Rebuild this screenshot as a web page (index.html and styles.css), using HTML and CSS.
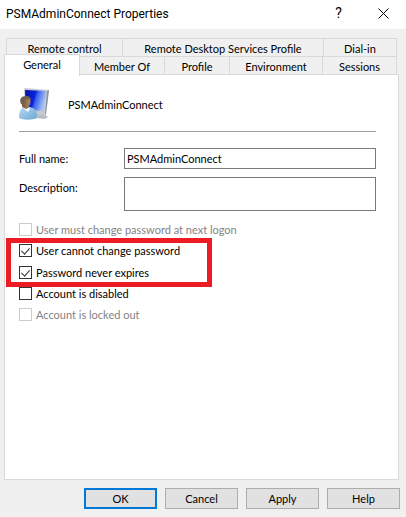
FILE: index.html
```html
<!DOCTYPE html>
<html lang="en">
<head>
    <meta charset="UTF-8">
    <meta name="viewport" content="width=device-width, initial-scale=1.0">
    <title>PSMAdminConnect Properties</title>
    <link rel="stylesheet" href="styles.css">
</head>
<body>
    <form class="dialog">
        <header class="title-bar">
            <h1>PSMAdminConnect Properties</h1>
            <button type="button" class="title-btn" aria-label="Help">?</button>
            <button type="button" class="title-btn" aria-label="Close">
                <svg width="11" height="11" viewBox="0 0 11 11"><path d="M.5 .5l10 10M10.5 .5l-10 10" stroke="#000" fill="none"/></svg>
            </button>
        </header>

        <div class="tabs" role="tablist">
            <div class="tab-row row-back">
                <button type="button" role="tab">Remote control</button>
                <button type="button" role="tab">Remote Desktop Services Profile</button>
                <button type="button" role="tab">Dial-in</button>
            </div>
            <div class="tab-row row-front">
                <button type="button" role="tab" class="active" aria-selected="true">General</button>
                <button type="button" role="tab">Member Of</button>
                <button type="button" role="tab">Profile</button>
                <button type="button" role="tab">Environment</button>
                <button type="button" role="tab">Sessions</button>
            </div>
        </div>

        <main class="panel" role="tabpanel">
            <div class="user">
                <svg class="user-icon" width="32" height="34" viewBox="0 0 32 34">
                    <defs>
                        <linearGradient id="screen" x1="0" y1="0" x2="1" y2="0.3">
                            <stop offset="0" stop-color="#04109c"/>
                            <stop offset="0.5" stop-color="#0a22e0"/>
                            <stop offset="0.6" stop-color="#3a62ea"/>
                            <stop offset="1" stop-color="#a8c2f6"/>
                        </linearGradient>
                        <linearGradient id="shirt" x1="0" y1="0" x2="1" y2="1">
                            <stop offset="0" stop-color="#b4dcf4"/>
                            <stop offset="1" stop-color="#6fa6d2"/>
                        </linearGradient>
                        <linearGradient id="face" x1="0" y1="0" x2="1" y2="0">
                            <stop offset="0" stop-color="#6e5138"/>
                            <stop offset="1" stop-color="#b58863"/>
                        </linearGradient>
                    </defs>
                    <!-- monitor -->
                    <path d="M16 26l9 1 4 3-3 2-10-1z" fill="#b9bec5"/>
                    <path d="M5 2l1-1 24 2-3 24-1 1-20-2z" fill="#c8ccd2"/>
                    <path d="M30 3l-3 24-1 1 2-24z" fill="#8b929c"/>
                    <path d="M6 3l21 1-2 20-18-1z" fill="url(#screen)"/>
                    <!-- person -->
                    <path d="M0 31c0-7 2-10 6-11l5 0c4 1 7 3 7 8 0 3-1 4-3 4-5 1-11 1-15-1z" fill="url(#shirt)"/>
                    <path d="M4 20l6 1 1 1-2 3-4-3z" fill="#f3f8fc"/>
                    <path d="M3 16l7 1-1 4-2 1-4-2z" fill="#936b4c"/>
                    <ellipse cx="7" cy="15" rx="4.500" ry="5.500" fill="url(#face)"/>
                    <path d="M2 17c-2-5 0-8 5-8 3 0 5 1 5 4-3-2-6-1-7 1 0 2-1 4-3 3z" fill="#6e6052"/>
                </svg>
                <span>PSMAdminConnect</span>
            </div>
            <hr>

            <div class="field">
                <label for="fullName">Full name:</label>
                <input type="text" id="fullName" value="PSMAdminConnect">
            </div>
            <div class="field">
                <label for="description">Description:</label>
                <textarea id="description"></textarea>
            </div>

            <div class="options">
                <label class="option disabled"><input type="checkbox" disabled>User must change password at next logon</label>
                <div class="highlight">
                    <label class="option"><input type="checkbox" checked>User cannot change password</label>
                    <label class="option"><input type="checkbox" checked>Password never expires</label>
                </div>
                <label class="option"><input type="checkbox">Account is disabled</label>
                <label class="option disabled"><input type="checkbox" disabled>Account is locked out</label>
            </div>
        </main>

        <footer class="actions">
            <button type="button" class="default">OK</button>
            <button type="button">Cancel</button>
            <button type="button">Apply</button>
            <button type="button">Help</button>
        </footer>
    </form>
</body>
</html>
```
FILE: styles.css
```css
* {
    box-sizing: border-box;
}
body {
    margin: 0;
    background-color: #f0f0f0;
    color: #000;
    font-family: Lato, "Liberation Sans", sans-serif;
    font-size: 11px;
    line-height: 13px;
}
button, input, textarea {
    font: inherit;
    color: inherit;
    margin: 0;
    border-radius: 0;
}
.dialog {
    display: flex;
    flex-direction: column;
    min-height: 100vh;
}

/* title bar */
.title-bar {
    display: flex;
    align-items: center;
    height: 29px;
    padding: 0 0 2px 6px;
    background-color: #fff;
    font-family: Roboto, "Liberation Sans", sans-serif;
}
.title-bar h1 {
    flex: 1;
    margin: 0;
    font-size: 12px;
    line-height: 16px;
    font-weight: normal;
}
.title-btn {
    display: flex;
    align-items: center;
    justify-content: center;
    width: 45px;
    height: 27px;
    padding: 0;
    border: none;
    background: none;
    color: #000;
    font-size: 14px;
}

/* tabs */
.tabs {
    padding: 9px 9px 0 6px;
}
.tab-row {
    display: grid;
}
.tab-row button {
    height: 19px;
    padding: 1px 0 0;
    border: 1px solid #d9d9d9;
    border-left: none;
    border-bottom: none;
    background-color: #f0f0f0;
    white-space: nowrap;
}
.tab-row button:first-child {
    border-left: 1px solid #d9d9d9;
}
.row-back {
    grid-template-columns: 117fr 201fr 73fr;
}
.row-back button {
    height: 18px;
}
.row-front {
    grid-template-columns: 74fr 85fr 65fr 93fr 74fr;
}
.row-front .active {
    position: relative;
    height: 22px;
    margin: -2px 0 -1px -2px;
    padding-bottom: 3px;
    background-color: #fff;
}

/* page */
.panel {
    flex: 1;
    margin: -1px 7px 0 4px;
    padding: 11px 22px 0 14px;
    border: 1px solid #d9d9d9;
    background-color: #fff;
}
.user {
    display: flex;
    align-items: center;
    gap: 17px;
    height: 36px;
}
hr {
    margin: 9px 0 16px;
    border: none;
    border-top: 1px solid #a0a0a0;
}
.field {
    display: flex;
    align-items: flex-start;
    margin-bottom: 8px;
}
.field label {
    width: 105px;
    padding-top: 4px;
}
.field input, .field textarea {
    flex: 1;
    min-width: 0;
    height: 21px;
    padding: 0 2px;
    border: 1px solid #7a7a7a;
    background-color: #fff;
    outline: none;
}
.field textarea {
    height: 34px;
    resize: none;
}

/* checkboxes */
.options {
    display: flex;
    flex-direction: column;
    align-items: flex-start;
    gap: 8px;
    padding-top: 4px;
}
.option {
    display: flex;
    align-items: center;
    gap: 4px;
}
.option input {
    position: relative;
    width: 13px;
    height: 13px;
    appearance: none;
    border: 1px solid #333;
    background-color: #fff;
}
.option input:checked::after {
    content: "";
    position: absolute;
    top: 1px;
    left: 3px;
    width: 4px;
    height: 7px;
    border: solid #333;
    border-width: 0 1px 1px 0;
    transform: rotate(42deg);
}
.option.disabled {
    color: #838383;
}
.option.disabled input {
    border-color: #ccc;
}
.highlight {
    position: relative;
    display: flex;
    flex-direction: column;
    gap: 9px;
}
.highlight::after {
    content: "";
    position: absolute;
    top: -6px;
    right: -32px;
    bottom: -8px;
    left: -13px;
    border: 5px solid #ed1c24;
    pointer-events: none;
}

/* bottom buttons */
.actions {
    display: flex;
    justify-content: flex-end;
    gap: 8px;
    padding: 8px 6px;
}
.actions button {
    width: 73px;
    height: 21px;
    padding: 0;
    border: 1px solid #adadad;
    background-color: #e1e1e1;
}
.actions .default {
    border: 2px solid #0078d7;
}
```
